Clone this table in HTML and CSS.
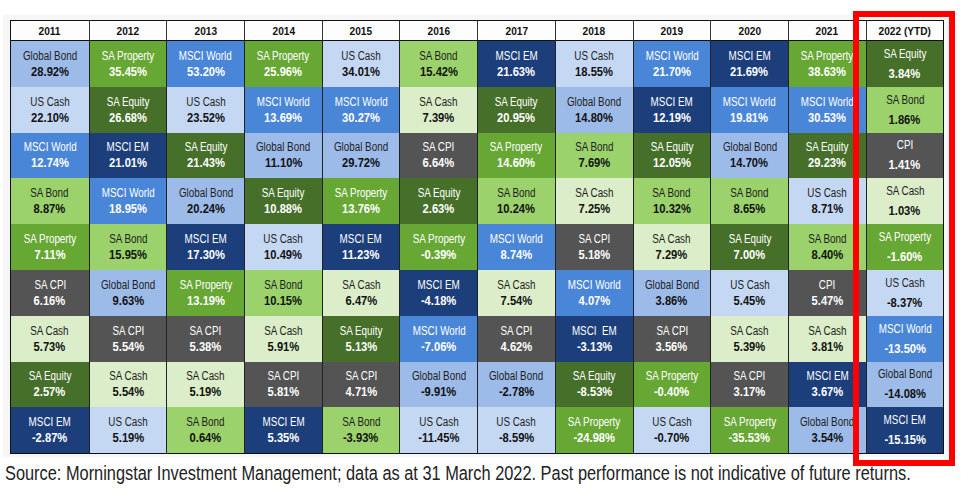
FILE: index.html
```html
<!DOCTYPE html>
<html>
<head>
<meta charset="utf-8">
<link rel="stylesheet" href="styles.css">
</head>
<body>
<div class="page">
  <div class="panel">
    <div class="table">
      <div class="h"><span>2011</span></div><div class="h"><span>2012</span></div><div class="h"><span>2013</span></div><div class="h"><span>2014</span></div><div class="h"><span>2015</span></div><div class="h"><span>2016</span></div><div class="h"><span>2017</span></div><div class="h"><span>2018</span></div><div class="h"><span>2019</span></div><div class="h"><span>2020</span></div><div class="h"><span>2021</span></div><div class="h ytd"><span>2022 (YTD)</span></div>

      <div class="c gb"><span>Global Bond</span><b>28.92%</b></div>
      <div class="c sp"><span>SA Property</span><b>35.45%</b></div>
      <div class="c mw"><span>MSCI World</span><b>53.20%</b></div>
      <div class="c sp"><span>SA Property</span><b>25.96%</b></div>
      <div class="c uc"><span>US Cash</span><b>34.01%</b></div>
      <div class="c sb"><span>SA Bond</span><b>15.42%</b></div>
      <div class="c em"><span>MSCI EM</span><b>21.63%</b></div>
      <div class="c uc"><span>US Cash</span><b>18.55%</b></div>
      <div class="c mw"><span>MSCI World</span><b>21.70%</b></div>
      <div class="c em"><span>MSCI EM</span><b>21.69%</b></div>
      <div class="c sp"><span>SA Property</span><b>38.63%</b></div>
      <div class="c se ytd"><span>SA Equity</span><b>3.84%</b></div>

      <div class="c uc"><span>US Cash</span><b>22.10%</b></div>
      <div class="c se"><span>SA Equity</span><b>26.68%</b></div>
      <div class="c uc"><span>US Cash</span><b>23.52%</b></div>
      <div class="c mw"><span>MSCI World</span><b>13.69%</b></div>
      <div class="c mw"><span>MSCI World</span><b>30.27%</b></div>
      <div class="c sc"><span>SA Cash</span><b>7.39%</b></div>
      <div class="c se"><span>SA Equity</span><b>20.95%</b></div>
      <div class="c gb"><span>Global Bond</span><b>14.80%</b></div>
      <div class="c em"><span>MSCI EM</span><b>12.19%</b></div>
      <div class="c mw"><span>MSCI World</span><b>19.81%</b></div>
      <div class="c mw"><span>MSCI World</span><b>30.53%</b></div>
      <div class="c sb ytd"><span>SA Bond</span><b>1.86%</b></div>

      <div class="c mw"><span>MSCI World</span><b>12.74%</b></div>
      <div class="c em"><span>MSCI EM</span><b>21.01%</b></div>
      <div class="c se"><span>SA Equity</span><b>21.43%</b></div>
      <div class="c gb"><span>Global Bond</span><b>11.10%</b></div>
      <div class="c gb"><span>Global Bond</span><b>29.72%</b></div>
      <div class="c cpi"><span>SA CPI</span><b>6.64%</b></div>
      <div class="c sp"><span>SA Property</span><b>14.60%</b></div>
      <div class="c sb"><span>SA Bond</span><b>7.69%</b></div>
      <div class="c se"><span>SA Equity</span><b>12.05%</b></div>
      <div class="c gb"><span>Global Bond</span><b>14.70%</b></div>
      <div class="c se"><span>SA Equity</span><b>29.23%</b></div>
      <div class="c cpi ytd"><span>CPI</span><b>1.41%</b></div>

      <div class="c sb"><span>SA Bond</span><b>8.87%</b></div>
      <div class="c mw"><span>MSCI World</span><b>18.95%</b></div>
      <div class="c gb"><span>Global Bond</span><b>20.24%</b></div>
      <div class="c se"><span>SA Equity</span><b>10.88%</b></div>
      <div class="c sp"><span>SA Property</span><b>13.76%</b></div>
      <div class="c se"><span>SA Equity</span><b>2.63%</b></div>
      <div class="c sb"><span>SA Bond</span><b>10.24%</b></div>
      <div class="c sc"><span>SA Cash</span><b>7.25%</b></div>
      <div class="c sb"><span>SA Bond</span><b>10.32%</b></div>
      <div class="c sb"><span>SA Bond</span><b>8.65%</b></div>
      <div class="c uc"><span>US Cash</span><b>8.71%</b></div>
      <div class="c sc ytd"><span>SA Cash</span><b>1.03%</b></div>

      <div class="c sp"><span>SA Property</span><b>7.11%</b></div>
      <div class="c sb"><span>SA Bond</span><b>15.95%</b></div>
      <div class="c em"><span>MSCI EM</span><b>17.30%</b></div>
      <div class="c uc"><span>US Cash</span><b>10.49%</b></div>
      <div class="c em"><span>MSCI EM</span><b>11.23%</b></div>
      <div class="c sp"><span>SA Property</span><b>-0.39%</b></div>
      <div class="c mw"><span>MSCI World</span><b>8.74%</b></div>
      <div class="c cpi"><span>SA CPI</span><b>5.18%</b></div>
      <div class="c sc"><span>SA Cash</span><b>7.29%</b></div>
      <div class="c se"><span>SA Equity</span><b>7.00%</b></div>
      <div class="c sb"><span>SA Bond</span><b>8.40%</b></div>
      <div class="c sp ytd"><span>SA Property</span><b>-1.60%</b></div>

      <div class="c cpi"><span>SA CPI</span><b>6.16%</b></div>
      <div class="c gb"><span>Global Bond</span><b>9.63%</b></div>
      <div class="c sp"><span>SA Property</span><b>13.19%</b></div>
      <div class="c sb"><span>SA Bond</span><b>10.15%</b></div>
      <div class="c sc"><span>SA Cash</span><b>6.47%</b></div>
      <div class="c em"><span>MSCI EM</span><b>-4.18%</b></div>
      <div class="c sc"><span>SA Cash</span><b>7.54%</b></div>
      <div class="c mw"><span>MSCI World</span><b>4.07%</b></div>
      <div class="c gb"><span>Global Bond</span><b>3.86%</b></div>
      <div class="c uc"><span>US Cash</span><b>5.45%</b></div>
      <div class="c cpi"><span>CPI</span><b>5.47%</b></div>
      <div class="c uc ytd"><span>US Cash</span><b>-8.37%</b></div>

      <div class="c sc"><span>SA Cash</span><b>5.73%</b></div>
      <div class="c cpi"><span>SA CPI</span><b>5.54%</b></div>
      <div class="c cpi"><span>SA CPI</span><b>5.38%</b></div>
      <div class="c sc"><span>SA Cash</span><b>5.91%</b></div>
      <div class="c se"><span>SA Equity</span><b>5.13%</b></div>
      <div class="c mw"><span>MSCI World</span><b>-7.06%</b></div>
      <div class="c cpi"><span>SA CPI</span><b>4.62%</b></div>
      <div class="c em"><span>MSCI&nbsp; EM</span><b>-3.13%</b></div>
      <div class="c cpi"><span>SA CPI</span><b>3.56%</b></div>
      <div class="c sc"><span>SA Cash</span><b>5.39%</b></div>
      <div class="c sc"><span>SA Cash</span><b>3.81%</b></div>
      <div class="c mw ytd"><span>MSCI World</span><b>-13.50%</b></div>

      <div class="c se"><span>SA Equity</span><b>2.57%</b></div>
      <div class="c sc"><span>SA Cash</span><b>5.54%</b></div>
      <div class="c sc"><span>SA Cash</span><b>5.19%</b></div>
      <div class="c cpi"><span>SA CPI</span><b>5.81%</b></div>
      <div class="c cpi"><span>SA CPI</span><b>4.71%</b></div>
      <div class="c gb"><span>Global Bond</span><b>-9.91%</b></div>
      <div class="c gb"><span>Global Bond</span><b>-2.78%</b></div>
      <div class="c se"><span>SA Equity</span><b>-8.53%</b></div>
      <div class="c sp"><span>SA Property</span><b>-0.40%</b></div>
      <div class="c cpi"><span>SA CPI</span><b>3.17%</b></div>
      <div class="c em"><span>MSCI EM</span><b>3.67%</b></div>
      <div class="c gb ytd"><span>Global Bond</span><b>-14.08%</b></div>

      <div class="c em"><span>MSCI EM</span><b>-2.87%</b></div>
      <div class="c uc"><span>US Cash</span><b>5.19%</b></div>
      <div class="c sb"><span>SA Bond</span><b>0.64%</b></div>
      <div class="c em"><span>MSCI EM</span><b>5.35%</b></div>
      <div class="c sb"><span>SA Bond</span><b>-3.93%</b></div>
      <div class="c uc"><span>US Cash</span><b>-11.45%</b></div>
      <div class="c uc"><span>US Cash</span><b>-8.59%</b></div>
      <div class="c sp"><span>SA Property</span><b>-24.98%</b></div>
      <div class="c uc"><span>US Cash</span><b>-0.70%</b></div>
      <div class="c sp"><span>SA Property</span><b>-35.53%</b></div>
      <div class="c gb"><span>Global Bond</span><b>3.54%</b></div>
      <div class="c em ytd"><span>MSCI EM</span><b>-15.15%</b></div>
    </div>
  </div>
  <p class="source"><span>Source: Morningstar Investment Management; data as at 31 March 2022. Past performance is not indicative of future returns.</span></p>
  <div class="highlight"></div>
</div>
</body>
</html>
```

FILE: styles.css
```css
html, body {
  margin: 0;
  padding: 0;
  background: #ffffff;
}
.page {
  position: relative;
  width: 970px;
  height: 499px;
  padding-top: 15px;
  box-sizing: border-box;
  overflow: hidden;
  font-family: "Liberation Sans", Arial, sans-serif;
}
.panel {
  margin-left: 3px;
  width: 952px;
  padding: 5px 0 3px 7px;
  box-sizing: border-box;
  background: #f6f6f6;
}
.table {
  display: grid;
  grid-template-columns: repeat(12, 77.7px);
  grid-template-rows: 20px repeat(9, 45.8px);
  width: 932px;
  border: 1.5px solid #111;
  box-sizing: content-box;
  background: #fff;
}
.h {
  display: flex;
  align-items: center;
  justify-content: center;
  background: #fdfdfd;
  border-left: 1px solid #333;
  border-bottom: 1.5px solid #111;
  font-weight: bold;
  font-size: 11.5px;
  color: #111;
}
.h span {
  display: inline-block;
  transform: scaleX(0.88);
  white-space: nowrap;
}
.h:first-child { border-left: none; }
.c {
  display: flex;
  flex-direction: column;
  align-items: center;
  justify-content: center;
  line-height: 15px;
  border-left: 1px solid #222;
  color: #1e1e1e;
}
.c:nth-child(12n+1) { border-left: none; }
.c span {
  display: inline-block;
  font-size: 12px;
  white-space: nowrap;
  transform: scaleX(0.82);
}
.c b {
  display: inline-block;
  font-size: 13px;
  font-weight: bold;
  white-space: nowrap;
  transform: scaleX(0.86);
  color: #111;
}
.c.ytd b { margin-top: 4px; }
.gb { background: #9dbbe9; }
.uc { background: #c5d8f3; }
.mw { background: #4a86d8; }
.em { background: #1c3e7b; }
.sp { background: #67a834; }
.se { background: #46702a; }
.sb { background: #9bd26b; }
.sc { background: #dbedc9; }
.cpi { background: #545454; }
.mw, .em, .sp, .se, .cpi { color: #fff; }
.mw b, .em b, .sp b, .se b, .cpi b { color: #fff; }
.source {
  margin: 6px 0 0 5px;
  font-size: 20px;
  line-height: 20px;
  color: #222;
  white-space: nowrap;
}
.source span {
  display: inline-block;
  transform: scaleX(0.818);
  transform-origin: left center;
}
.highlight {
  position: absolute;
  left: 853px;
  top: 11px;
  width: 102px;
  height: 455px;
  border: 6px solid #f00;
  box-sizing: border-box;
}
```
